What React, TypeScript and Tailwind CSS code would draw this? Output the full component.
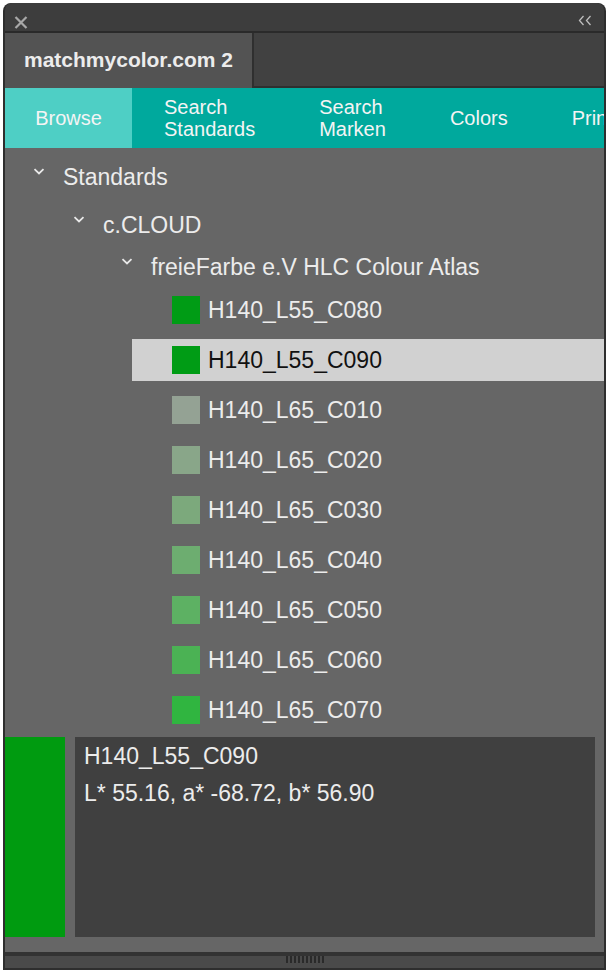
import React from 'react';

const leaves = [
  { name: 'H140_L55_C080', color: '#009c15' },
  { name: 'H140_L55_C090', color: '#009c15', selected: true },
  { name: 'H140_L65_C010', color: '#94a294' },
  { name: 'H140_L65_C020', color: '#89a689' },
  { name: 'H140_L65_C030', color: '#7ca97c' },
  { name: 'H140_L65_C040', color: '#6dad70' },
  { name: 'H140_L65_C050', color: '#5db163' },
  { name: 'H140_L65_C060', color: '#4bb254' },
  { name: 'H140_L65_C070', color: '#30b540' },
];

function Chevron() {
  return (
    <svg width="12" height="7" viewBox="0 0 12 7" className="mt-[12px] shrink-0">
      <path d="M1.5 1.2 L6 5.5 L10.5 1.2" fill="none" stroke="#e8e8e8" strokeWidth="1.8" />
    </svg>
  );
}

function Branch({ label, pl }: { label: string; pl: string }) {
  return (
    <div className={`flex h-[42px] ${pl}`}>
      <div className="w-[30px] h-full flex items-start">
        <Chevron />
      </div>
      <span className="text-[23px] leading-[42px] text-[#ececec]">{label}</span>
    </div>
  );
}

export default function App() {
  return (
    <div
      className="min-h-screen bg-white pt-[3px] pl-[3px]"
      style={{ fontFamily: '"Liberation Sans", Arial, sans-serif' }}
    >
      <div className="w-[603px] h-[967px] bg-[#2e2e2e] rounded-t-[8px] px-[2px] pb-[2px] flex flex-col overflow-hidden">
        {/* title bar */}
        <div className="h-[28px] bg-[#3d3d3d] rounded-t-[7px] flex justify-between shrink-0">
          <svg width="14" height="13" viewBox="0 0 14 13" className="ml-[9px] mt-[13px]">
            <path d="M1.5 1 L12.5 12 M12.5 1 L1.5 12" stroke="#a8a8a8" strokeWidth="2.2" />
          </svg>
          <svg width="14" height="11" viewBox="0 0 14 11" className="mr-[12px] mt-[12px]">
            <path d="M5.5 1 L1.5 5.5 L5.5 10 M12.5 1 L8.5 5.5 L12.5 10" fill="none" stroke="#bdbdbd" strokeWidth="1.3" />
          </svg>
        </div>
        <div className="h-[2px] bg-[#2a2a2a] shrink-0" />

        {/* panel tab */}
        <div className="h-[55px] flex shrink-0">
          <div className="w-[249px] bg-[#535353] border-r-2 border-[#2f2f2f] flex items-center pl-[19px] pb-[2px]">
            <span className="text-[21px] font-bold text-[#ececec]">matchmycolor.com 2</span>
          </div>
          <div className="flex-1 bg-[#414141] border-b-2 border-[#2f2f2f]" />
        </div>

        {/* nav */}
        <div className="h-[60px] bg-[#00a99d] flex overflow-hidden shrink-0 text-[20px] leading-[22px] text-[#f4f4f4]">
          <div className="w-[127px] bg-[#4ecfc5] flex items-center justify-center shrink-0">Browse</div>
          <div className="px-[32px] flex flex-col justify-center shrink-0">
            <span>Search</span>
            <span>Standards</span>
          </div>
          <div className="px-[32px] flex flex-col justify-center shrink-0">
            <span>Search</span>
            <span>Marken</span>
          </div>
          <div className="px-[32px] flex items-center shrink-0">Colors</div>
          <div className="px-[32px] flex items-center shrink-0 whitespace-nowrap">Print</div>
        </div>

        {/* tree + details */}
        <div className="flex-1 bg-[#666666] flex flex-col">
          <div className="flex-1 pt-[8px]">
            <Branch label="Standards" pl="pl-[28px]" />
            <div className="mt-[6px]">
              <Branch label="c.CLOUD" pl="pl-[68px]" />
            </div>
            <Branch label="freieFarbe e.V HLC Colour Atlas" pl="pl-[116px]" />
            <div className="mt-[1px] ml-[127px] flex flex-col gap-[8px]">
              {leaves.map((l) => (
                <div
                  key={l.name}
                  className={`h-[42px] flex items-center gap-[8px] pl-[40px] ${l.selected ? 'bg-[#d1d1d1] text-[#111111]' : 'text-[#ececec]'}`}
                >
                  <div className="w-[28px] h-[28px] shrink-0" style={{ backgroundColor: l.color }} />
                  <span className="text-[23px] leading-[42px]">{l.name}</span>
                </div>
              ))}
            </div>
          </div>

          <div className="h-[200px] mb-[15px] flex gap-[10px] mr-[9px] mt-[6px]">
            <div className="w-[60px] bg-[#009b10]" />
            <div className="flex-1 bg-[#404040] pl-[9px] pt-[1px] text-[23px] leading-[37px] text-[#ececec]">
              <div>H140_L55_C090</div>
              <div>L* 55.16, a* -68.72, b* 56.90</div>
            </div>
          </div>
        </div>

        {/* footer */}
        <div className="h-[4px] bg-[#333333] shrink-0" />
        <div className="h-[12px] bg-[#4a4a4a] flex justify-center items-start shrink-0">
          <div className="flex gap-[2px]">
            {Array.from({ length: 10 }).map((_, i) => (
              <span key={i} className="w-[2px] h-[7px] bg-[#2a2a2a]" />
            ))}
          </div>
        </div>
      </div>
    </div>
  );
}
